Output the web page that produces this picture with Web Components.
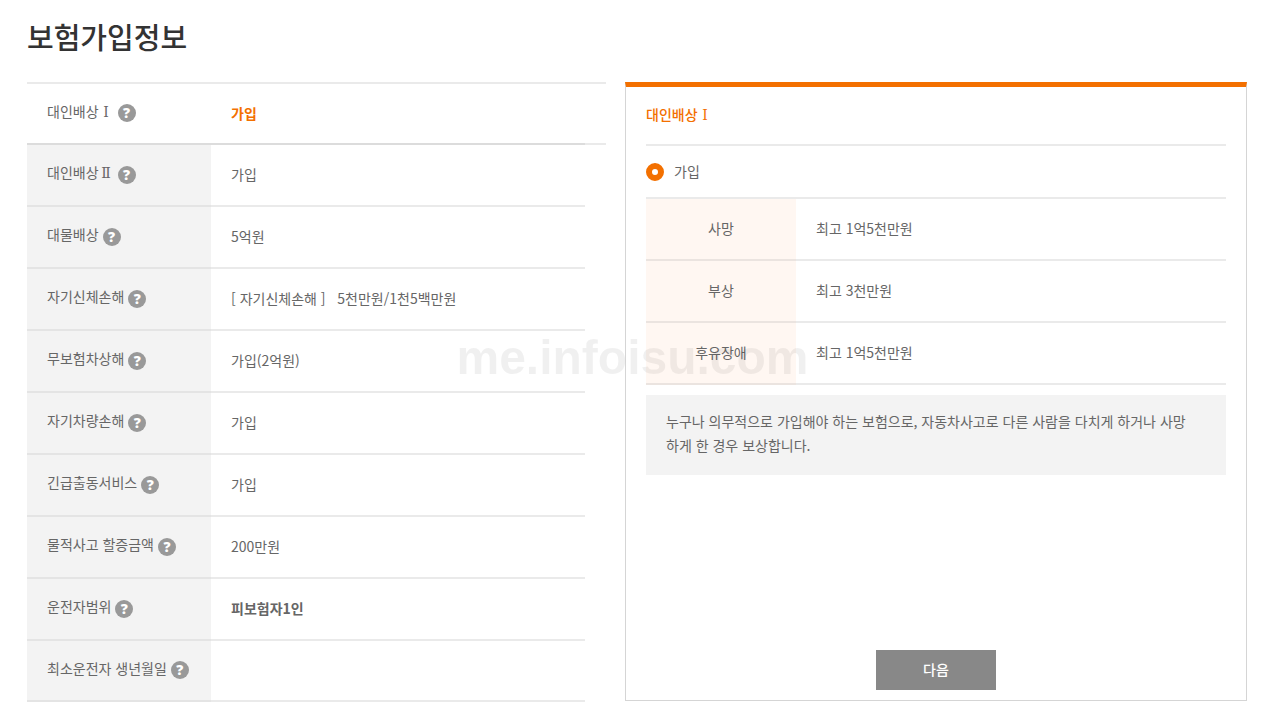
<!DOCTYPE html>
<html lang="ko">
<head>
<meta charset="utf-8">
<meta name="viewport" content="width=device-width, initial-scale=1">
<title>보험가입정보</title>
<style>
  :root {
    --accent: #f37000;
    --line: #eaeaea;
    --text: #666;
    --muted: #f3f3f3;
  }

  body {
    margin: 0;
    color: var(--text);
    background: #fff;
    font: 14px/24px "Noto Sans CJK KR", sans-serif;
  }
</style>
</head>
<body>
<insurance-page>
  <span slot="title">보험가입정보</span>
  <coverage-list></coverage-list>
  <coverage-panel>
    <span slot="heading">대인배상<roman-numeral>Ⅰ</roman-numeral></span>
    <coverage-option slot="option" name="coverage">가입</coverage-option>
    <limit-table></limit-table>
    <info-note>누구나 의무적으로 가입해야 하는 보험으로, 자동차사고로 다른 사람을 다치게 하거나 사망하게 한 경우 보상합니다.</info-note>
    <next-button slot="action">다음</next-button>
  </coverage-panel>
</insurance-page>
<water-mark>me.infoisu.com</water-mark>

<script>
const coverages = [
  { label: "대인배상", numeral: "Ⅰ", value: "가입", active: true },
  { label: "대인배상", numeral: "Ⅱ", value: "가입" },
  { label: "대물배상", value: "5억원" },
  { label: "자기신체손해", value: "[ 자기신체손해 ]\u00a0\u00a0 5천만원/1천5백만원" },
  { label: "무보험차상해", value: "가입(2억원)" },
  { label: "자기차량손해", value: "가입" },
  { label: "긴급출동서비스", value: "가입" },
  { label: "물적사고 할증금액", value: "200만원" },
  { label: "운전자범위", value: "피보험자1인", strong: true },
  { label: "최소운전자 생년월일", value: "" },
];

const limits = [
  ["사망", "최고 1억5천만원"],
  ["부상", "최고 3천만원"],
  ["후유장애", "최고 1억5천만원"],
];

class BaseElement extends HTMLElement {
  constructor() {
    super();

    const template = document.createElement("template");
    template.innerHTML = `<style>${this.styles}</style>${this.markup}`;
    this.attachShadow({ mode: "open" }).appendChild(template.content.cloneNode(true));
  }
}

class InsurancePage extends BaseElement {
  get styles() {
    return /* css */ `
      :host {
        display: block;
        padding: 14px 18px 12px 27px;
      }

      h1 {
        margin: 0 0 24px;
        color: #333;
        font-size: 29px;
        font-weight: 500;
        line-height: 44px;
      }

      main {
        display: grid;
        grid-template-columns: 579fr 622fr;
        gap: 19px;
      }
    `;
  }

  get markup() {
    return /* html */ `<h1><slot name="title"></slot></h1><main><slot></slot></main>`;
  }
}

// Full-width numeral with serifs, always in the regular weight
class RomanNumeral extends BaseElement {
  get styles() {
    return /* css */ `
      :host {
        display: inline-block;
        width: 15px;
        font-family: "DejaVu Serif", serif;
        font-weight: 400;
        line-height: 1;
        text-align: center;
      }
    `;
  }

  get markup() {
    return /* html */ `<slot></slot>`;
  }
}

class HelpButton extends BaseElement {
  get styles() {
    return /* css */ `
      :host {
        display: inline-flex;
      }

      button {
        width: 18px;
        height: 18px;
        padding: 0;
        border: 0;
        border-radius: 50%;
        background: #999;
        color: #fff;
        font: 800 14px/18px "Open Sans", sans-serif;
        text-align: center;
        cursor: pointer;
      }
    `;
  }

  get markup() {
    return /* html */ `<button type="button">?</button>`;
  }
}

class CoverageList extends BaseElement {
  get styles() {
    return /* css */ `
      :host {
        display: block;
      }

      table {
        width: 100%;
        border-spacing: 0;
        table-layout: fixed;
        border-top: 2px solid var(--line);
      }

      .label {
        width: 184px;
      }

      .space {
        width: 21px;
      }

      th,
      td {
        box-sizing: border-box;
        height: 62px;
        padding: 0 0 2px 20px;
        border-bottom: 2px solid var(--line);
        font-weight: 400;
        text-align: left;
      }

      th {
        background: var(--muted);
        border-bottom-color: #e4e4e4;
      }

      th div {
        display: flex;
        align-items: center;
        gap: 4px;
        padding-top: 1px;
      }

      th span {
        padding-bottom: 5px;
        white-space: nowrap;
      }

      td:last-child {
        padding: 0;
        border-bottom-color: transparent;
      }

      tr:last-child th,
      tr:last-child td {
        height: 61px;
      }

      .active th,
      .active td {
        height: 61px;
        background: none;
        border-bottom-color: #dcdcdc;
      }

      .active td {
        color: var(--accent);
        font-weight: 700;
      }

      .active td:last-child {
        border-bottom-color: var(--line);
      }

      .strong td {
        font-weight: 700;
      }
    `;
  }

  get markup() {
    const rows = coverages.map(({ label, numeral, value, active, strong }) => /* html */ `
      <tr class="${active ? "active" : strong ? "strong" : ""}">
        <th scope="row"><div><span>${label}${numeral ? `<roman-numeral>${numeral}</roman-numeral>` : ""}</span><help-button></help-button></div></th>
        <td>${value}</td>
        <td></td>
      </tr>`);

    return /* html */ `
      <table>
        <colgroup><col class="label"><col><col class="space"></colgroup>
        <tbody>${rows.join("")}</tbody>
      </table>`;
  }
}

class CoveragePanel extends BaseElement {
  get styles() {
    return /* css */ `
      :host {
        display: flex;
        flex-direction: column;
        margin-bottom: 1px;
        padding: 0 20px 10px;
        border: 1px solid #d5d5d5;
        border-top: 5px solid var(--accent);
      }

      h2 {
        margin: 0;
        padding: 15px 0 18px;
        border-bottom: 2px solid var(--line);
        color: var(--accent);
        font-size: 14px;
        font-weight: 500;
        line-height: 24px;
      }

      footer {
        display: flex;
        justify-content: center;
        margin-top: auto;
      }
    `;
  }

  get markup() {
    return /* html */ `
      <h2><slot name="heading"></slot></h2>
      <slot name="option"></slot>
      <slot></slot>
      <footer><slot name="action"></slot></footer>`;
  }
}

class CoverageOption extends BaseElement {
  get styles() {
    return /* css */ `
      :host {
        display: block;
        padding: 13px 0 12px;
      }

      label {
        display: flex;
        align-items: center;
        gap: 10px;
      }

      span {
        padding-bottom: 2px;
      }

      input {
        appearance: none;
        width: 18px;
        height: 18px;
        margin: 0;
        border: 1px solid #bbb;
        border-radius: 50%;
        background: #fff;
      }

      input:checked {
        border: 6px solid var(--accent);
      }
    `;
  }

  get markup() {
    return /* html */ `<label><input type="radio" checked><span><slot></slot></span></label>`;
  }

  connectedCallback() {
    this.shadowRoot.querySelector("input").name = this.getAttribute("name");
  }
}

class LimitTable extends BaseElement {
  get styles() {
    return /* css */ `
      :host {
        display: block;
      }

      table {
        width: 100%;
        border-spacing: 0;
        border-top: 2px solid var(--line);
      }

      th,
      td {
        box-sizing: border-box;
        height: 62px;
        padding: 0 0 2px 20px;
        border-bottom: 2px solid var(--line);
        font-weight: 400;
        text-align: left;
      }

      th {
        width: 150px;
        padding-left: 0;
        background: #fff7f2;
        border-bottom-color: #ebe4e0;
        text-align: center;
      }
    `;
  }

  get markup() {
    const rows = limits.map(([label, value]) => `<tr><th scope="row">${label}</th><td>${value}</td></tr>`);

    return /* html */ `<table><tbody>${rows.join("")}</tbody></table>`;
  }
}

class InfoNote extends BaseElement {
  get styles() {
    return /* css */ `
      :host {
        display: block;
        margin-top: 10px;
        background: var(--muted);
      }

      p {
        margin: 0;
        padding: 14px 36px 18px 20px;
        word-break: break-all;
      }
    `;
  }

  get markup() {
    return /* html */ `<p><slot></slot></p>`;
  }
}

class NextButton extends BaseElement {
  get styles() {
    return /* css */ `
      :host {
        display: block;
      }

      button {
        width: 120px;
        height: 40px;
        padding: 0 0 2px;
        border: 0;
        background: #888;
        color: #fff;
        font: inherit;
        font-weight: 500;
        cursor: pointer;
      }
    `;
  }

  get markup() {
    return /* html */ `<button type="button"><slot></slot></button>`;
  }
}

class WaterMark extends BaseElement {
  get styles() {
    return /* css */ `
      :host {
        position: fixed;
        inset: 0;
        display: grid;
        place-items: center;
        color: rgb(0 0 0 / 6%);
        font: 700 48px "Liberation Sans", sans-serif;
        pointer-events: none;
      }
    `;
  }

  get markup() {
    return /* html */ `<span><slot></slot></span>`;
  }
}

customElements.define("insurance-page", InsurancePage);
customElements.define("roman-numeral", RomanNumeral);
customElements.define("help-button", HelpButton);
customElements.define("coverage-list", CoverageList);
customElements.define("coverage-panel", CoveragePanel);
customElements.define("coverage-option", CoverageOption);
customElements.define("limit-table", LimitTable);
customElements.define("info-note", InfoNote);
customElements.define("next-button", NextButton);
customElements.define("water-mark", WaterMark);
</script>
</body>
</html>
